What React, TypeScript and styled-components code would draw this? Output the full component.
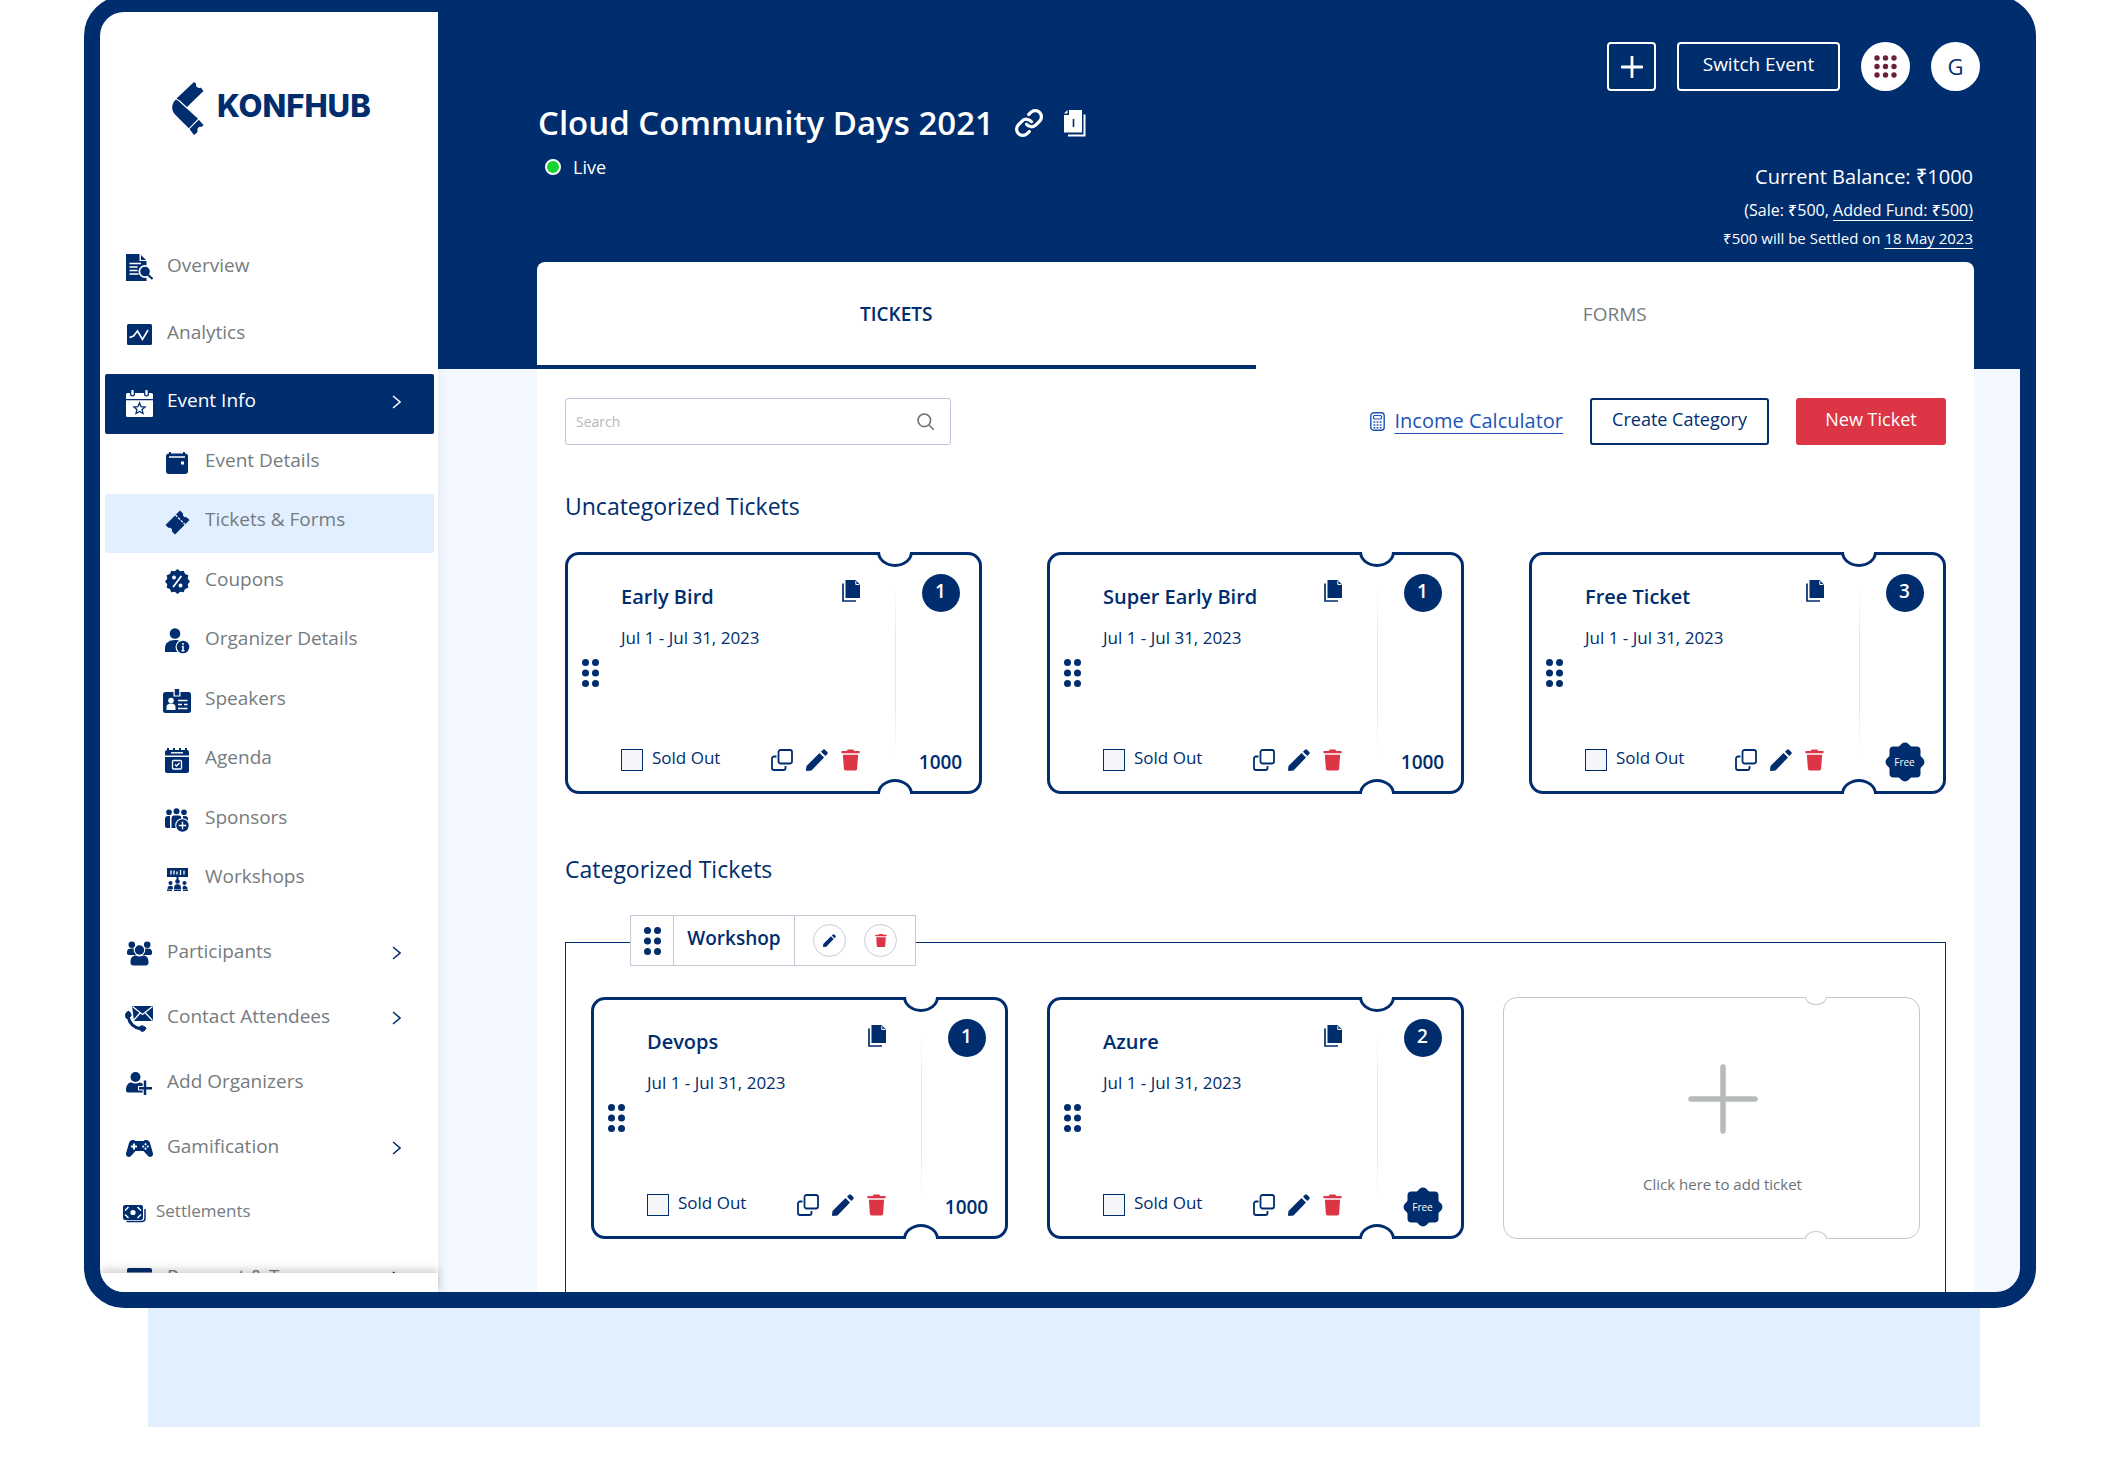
import React from 'react';
import styled, { createGlobalStyle, css } from 'styled-components';
import { Link as LinkIcon } from 'lucide-react';

const navy = '#002d6e';
const grey = '#757b80';
const red = '#dc3545';
const pale = '#f3f7fe';
const sky = '#e1efff';

const GlobalStyle = createGlobalStyle`
  *, *::before, *::after { box-sizing: border-box; }
  body {
    margin: 0;
    background: #fff;
    color: ${navy};
    font-family: "Open Sans", "Noto Sans", sans-serif;
  }
  h1, h2, h3, p, ul { margin: 0; padding: 0; }
  ul { list-style: none; }
  a { color: inherit; text-decoration: none; }
  svg { display: block; flex: none; }
  button, input { font: inherit; color: inherit; }
  button { padding: 0; border: 0; background: none; cursor: pointer; }
`;

/* ---------- page shell ---------- */

const Page = styled.div`
  display: flex;
  flex-direction: column;
  min-height: 100vh;
  overflow: hidden;
`;

const Device = styled.div`
  display: grid;
  grid-template-columns: 338px minmax(0, 1fr);
  margin: -4px 92px 0 84px;
  border: 16px solid ${navy};
  border-radius: 40px;
  background: ${navy};
  overflow: hidden;
`;

const Stand = styled.div`
  height: 119px;
  margin: 0 148px;
  background: ${sky};
`;

/* ---------- sidebar ---------- */

const Sidebar = styled.aside`
  contain: size;
  position: relative;
  z-index: 1;
  display: flex;
  flex-direction: column;
  background: #fff;
  box-shadow: 3px 360px 8px rgba(20, 50, 110, 0.05);
`;

const Brand = styled.a`
  display: flex;
  align-items: center;
  gap: 13px;
  height: 223px;
  padding: 0 0 30px 72px;
`;

const BrandName = styled.span`
  padding-bottom: 5px;
  font-family: Inter, "Open Sans", sans-serif;
  font-size: 31px;
  font-weight: 800;
  line-height: 36px;
`;

const Nav = styled.nav`
  flex: 1 1 0;
  min-height: 0;
  overflow: hidden;
  padding: 0 4px 0 5px;
`;

const SidebarFoot = styled.div`
  height: 19px;
  background: #fff;
  box-shadow: 0 -3px 10px rgba(0, 0, 0, 0.2);
`;

const NavGroup = styled.ul<{ $row: number; $top?: number; $bottom?: number }>`
  display: grid;
  grid-auto-rows: ${p => p.$row}px;
  padding: ${p => p.$top ?? 0}px 0 ${p => p.$bottom ?? 0}px;
`;

const SubNav = styled.ul`
  display: grid;
  grid-auto-rows: 1fr;
  height: 476px;
`;

const NavLink = styled.a<{ $tone?: 'plain' | 'open' | 'current'; $sub?: boolean; $small?: boolean }>`
  display: flex;
  align-items: center;
  gap: 14px;
  height: 100%;
  padding: 0 33px 0 ${p => (p.$sub ? 58 : 20)}px;
  border-radius: 2px;
  color: ${grey};
  font-size: 19px;
  line-height: 26px;
  ${p => p.$tone === 'open' && css`background: ${navy}; color: #fff;`}
  ${p => p.$tone === 'current' && css`background: ${sky};`}
  ${p => p.$small && css`gap: 8px; padding-left: 15px; font-size: 17px;`}
`;

const NavIcon = styled.span<{ $light?: boolean }>`
  display: flex;
  justify-content: center;
  width: 28px;
  padding-bottom: 2px;
  color: ${p => (p.$light ? '#fff' : navy)};
`;

const NavLabel = styled.span`
  flex: 1;
  padding-bottom: 8px;
  white-space: nowrap;
`;

const NavChevron = styled.span<{ $light?: boolean }>`
  padding-bottom: 4px;
  color: ${p => (p.$light ? '#fff' : navy)};
`;

/* ---------- main header ---------- */

const Main = styled.main`
  display: flex;
  flex-direction: column;
  background: linear-gradient(${navy} 357px, ${pale} 357px);
`;

const TopBar = styled.div`
  display: flex;
  justify-content: flex-end;
  gap: 21px;
  padding: 30px 40px 0;
`;

const OutlineButton = styled.button<{ $wide?: boolean }>`
  display: flex;
  align-items: center;
  justify-content: center;
  height: 49px;
  min-width: ${p => (p.$wide ? 163 : 49)}px;
  padding-bottom: ${p => (p.$wide ? 6 : 0)}px;
  border: 2px solid #fff;
  border-radius: 4px;
  color: #fff;
  font-size: 19px;
`;

const RoundButton = styled.button<{ $letter?: boolean }>`
  display: flex;
  align-items: center;
  justify-content: center;
  width: 49px;
  height: 49px;
  padding-bottom: ${p => (p.$letter ? 2 : 0)}px;
  border-radius: 50%;
  background: #fff;
  color: ${navy};
  font-size: 22px;
  font-weight: 500;
`;

const EventHeader = styled.header`
  display: flex;
  justify-content: space-between;
  height: 171px;
  padding: 10px 47px 10px 100px;
  color: #fff;
`;

const TitleRow = styled.div`
  display: flex;
  align-items: center;
  gap: 20px;
`;

const Title = styled.h1`
  font-size: 33px;
  font-weight: 600;
  line-height: 44px;
`;

const Status = styled.p`
  display: flex;
  align-items: center;
  gap: 12px;
  padding: 10px 0 0 7px;
  font-size: 18px;
  line-height: 24px;
`;

const StatusDot = styled.span`
  width: 16px;
  height: 16px;
  border: 2px solid #fff;
  border-radius: 50%;
  background: #12d62c;
`;

const Balance = styled.div`
  display: flex;
  flex-direction: column;
  align-self: flex-end;
  text-align: right;
  font-size: 15px;
  line-height: 28px;
`;

const BalanceTotal = styled.p`
  font-size: 20px;
  font-weight: 500;
  line-height: 38px;
`;

const BalanceSplit = styled.p`
  font-size: 16px;
  font-weight: 500;
`;

const Underlined = styled.a`
  text-decoration: underline;
  text-decoration-thickness: 1px;
  text-underline-offset: 4px;
`;

/* ---------- panel ---------- */

const Panel = styled.section`
  flex: 1;
  margin: 0 46px 0 99px;
  border-radius: 8px 8px 0 0;
  background: #fff;
`;

const Tabs = styled.div`
  display: grid;
  grid-template-columns: 1fr 1fr;
`;

const Tab = styled.button<{ $active?: boolean }>`
  height: 107px;
  border-bottom: 4px solid ${p => (p.$active ? navy : 'transparent')};
  color: ${p => (p.$active ? navy : grey)};
  font-size: 19px;
  font-weight: ${p => (p.$active ? 600 : 400)};
`;

const PanelBody = styled.div`
  padding: 29px 28px 0;
`;

const Toolbar = styled.div`
  display: flex;
  align-items: center;
  gap: 27px;
`;

const SearchBox = styled.label`
  display: flex;
  align-items: center;
  width: 386px;
  height: 47px;
  margin-right: auto;
  padding: 0 15px 0 8px;
  border: 1px solid #bfc3da;
  border-radius: 3px;
  color: #6d7276;
`;

const SearchInput = styled.input`
  flex: 1;
  min-width: 0;
  border: 0;
  outline: 0;
  background: none;
  font-size: 14px;
  &::placeholder { color: #b4b8bb; opacity: 1; }
`;

const CalculatorLink = styled.a`
  display: flex;
  align-items: center;
  gap: 9px;
  color: #1c54b8;
  font-size: 20px;
  font-weight: 500;
`;

const CalculatorText = styled.span`
  padding-bottom: 3px;
  text-decoration: underline;
  text-decoration-thickness: 1px;
  text-underline-offset: 5px;
`;

const ActionButton = styled.button<{ $solid?: boolean }>`
  height: 47px;
  padding: 0 20px 6px;
  min-width: ${p => (p.$solid ? 150 : 179)}px;
  border: 2px solid ${p => (p.$solid ? red : navy)};
  border-radius: 3px;
  background: ${p => (p.$solid ? red : '#fff')};
  color: ${p => (p.$solid ? '#fff' : navy)};
  font-size: 18px;
  font-weight: 500;
`;

const SectionTitle = styled.h2<{ $top: number }>`
  padding: ${p => p.$top}px 0 30px;
  font-size: 23px;
  font-weight: 500;
  line-height: 32px;
`;

const TicketGrid = styled.div<{ $gap: number }>`
  display: grid;
  grid-template-columns: repeat(3, minmax(0, 1fr));
  gap: ${p => p.$gap}px;
`;

/* ---------- ticket card ---------- */

type NotchProps = { $line: string; $w: number; $r: number; $x: number };

const notch = css<NotchProps>`
  position: relative;
  border: ${p => p.$w}px solid ${p => p.$line};
  background: #fff;
  &::before, &::after {
    content: "";
    position: absolute;
    right: ${p => p.$x}px;
    width: ${p => p.$r * 2}px;
    height: ${p => p.$r - 3}px;
    border: ${p => p.$w}px solid ${p => p.$line};
    background: #fff;
  }
  &::before {
    top: -${p => p.$w}px;
    border-top: 0;
    border-radius: 0 0 50% 50% / 0 0 100% 100%;
  }
  &::after {
    bottom: -${p => p.$w}px;
    border-bottom: 0;
    border-radius: 50% 50% 0 0 / 100% 100% 0 0;
  }
`;

const Card = styled.article<NotchProps>`
  ${notch}
  display: grid;
  grid-template-columns: 53px minmax(0, 1fr) 84px;
  min-height: 242px;
  border-radius: 14px;
`;

const Handle = styled.button`
  display: flex;
  align-items: center;
  padding-left: 14px;
  cursor: grab;
`;

const CardMain = styled.div`
  display: flex;
  flex-direction: column;
  padding: 25px 35px 20px 0;
`;

const CardTop = styled.div`
  display: flex;
  justify-content: space-between;
  align-items: flex-start;
`;

const CardTitle = styled.h3`
  font-size: 20px;
  font-weight: 600;
  line-height: 34px;
`;

const CardDates = styled.p`
  padding-top: 12px;
  font-size: 17px;
  font-weight: 500;
  line-height: 24px;
`;

const CardFoot = styled.div`
  display: flex;
  align-items: center;
  gap: 13px;
  margin-top: auto;
`;

const SoldOut = styled.label`
  display: flex;
  align-items: center;
  gap: 9px;
  height: 22px;
  margin-right: auto;
  font-size: 17px;
  line-height: 22px;
`;

const SoldOutBox = styled.input`
  appearance: none;
  width: 22px;
  height: 22px;
  margin: 0;
  border: 1px solid ${navy};
  background: #f4f6f9;
  &:checked { background: ${navy}; }
`;

const SoldOutText = styled.span`
  padding-bottom: 4px;
`;

const IconButton = styled.button<{ $danger?: boolean; $ring?: boolean }>`
  display: flex;
  align-items: center;
  justify-content: center;
  color: ${p => (p.$danger ? red : navy)};
  ${p => p.$ring && css`
    width: 33px;
    height: 33px;
    border: 1px solid #c8ccda;
    border-radius: 50%;
  `}
`;

const Stub = styled.div`
  display: flex;
  flex-direction: column;
  align-items: center;
  justify-content: space-between;
  padding: 19px 0 9px 7px;
  background: linear-gradient(transparent, #e6e7ee 30%, #e6e7ee 70%, transparent) 0 31px / 1px 170px no-repeat;
`;

const Count = styled.span`
  display: flex;
  align-items: center;
  justify-content: center;
  width: 38px;
  height: 38px;
  padding-bottom: 4px;
  border-radius: 50%;
  background: ${navy};
  color: #fff;
  font-size: 19px;
  font-weight: 600;
`;

const PriceSlot = styled.span`
  display: grid;
  place-items: center;
  height: 40px;
  font-size: 19px;
  font-weight: 600;
  & > * { grid-area: 1 / 1; }
`;

const FreeText = styled.span`
  color: #fff;
  font-size: 10px;
  font-weight: 500;
`;

const AddCard = styled.button<NotchProps>`
  ${notch}
  display: flex;
  flex-direction: column;
  align-items: center;
  gap: 38px;
  padding: 66px 0 0 22px;
  min-height: 242px;
  border-radius: 14px;
  color: #6b7176;
  font-size: 15px;
  line-height: 24px;
`;

/* ---------- category ---------- */

const Category = styled.section`
  margin-top: 27px;
  padding: 0 25px 53px;
  border: 1px solid ${navy};
  border-bottom: 0;
`;

const CategoryTag = styled.div`
  position: relative;
  display: grid;
  grid-template-columns: 42px 121px 121px;
  width: max-content;
  height: 51px;
  margin: -28px 0 31px 39px;
  border: 1px solid #c3c7d6;
  background: #fff;
`;

const TagCell = styled.div<{ $pad?: number }>`
  display: flex;
  align-items: center;
  justify-content: center;
  gap: 18px;
  padding-bottom: ${p => p.$pad ?? 0}px;
  font-size: 19px;
  font-weight: 600;
  & + & { border-left: 1px solid #c3c7d6; }
`;

/* ---------- drawings ---------- */

const Svg = ({ w, h, box, children }: { w: number; h: number; box?: string; children: React.ReactNode }) => (
  <svg width={w} height={h} viewBox={box ?? `0 0 ${w} ${h}`} fill="currentColor" aria-hidden="true">{children}</svg>
);

const LogoMark = () => (
  <Svg w={32} h={53}>
    <path d="M22 0l2 1.500c-.6 3 1.600 5 4.300 4.200 1-.2 1.500.5 1.500 1.300L31.500 9 15 25 7.800 18.600 4.500 16.500z" />
    <path d="M4 17.500L7 19.200 26 36.800 16.800 46.200 3.500 33C-1 28.500-1 22 4 17.500z" />
    <path d="M26.800 37.800L31.500 43l-1.500 1.800c-3-.8-5.200 1.400-4.500 4.200.2 1-.3 1.500-1 2L22 53l-4.500-6z" />
    <path d="M7 19L16 27" stroke="#fff" strokeWidth=".8" />
  </Svg>
);

const OverviewIcon = () => (
  <Svg w={27} h={27}>
    <path d="M0 0h13.500v7H20.500v20H0z" />
    <path d="M15 1l5 5h-5z" />
    <path d="M3.500 9.500H15M3.500 13h8M3.500 16.500h8M3.500 20h9" stroke="#fff" strokeWidth="1.500" />
    <circle cx="19" cy="17.500" r="6.500" fill="#fff" />
    <circle cx="19" cy="17.500" r="4.800" />
    <path d="M21 20l5.500 5" stroke="currentColor" strokeWidth="2" />
  </Svg>
);

const AnalyticsIcon = () => (
  <Svg w={25} h={21}>
    <rect width="25" height="21" rx="1.500" />
    <path d="M2.500 13.500l4-1.500 4-5 5 8.500L21 6" fill="none" stroke="#fff" strokeWidth="1.600" />
  </Svg>
);

const EventInfoIcon = () => (
  <Svg w={27} h={27}>
    <path d="M0 4.500A1.500 1.500 0 011.500 3H25.500A1.500 1.500 0 0127 4.500V9H0z" />
    <path d="M0 10.200h27v15.300a1.500 1.500 0 01-1.500 1.500h-24A1.500 1.500 0 010 25.500z" />
    <path d="M6.500 0v4M20.500 0v4" stroke={navy} strokeWidth="5" strokeLinecap="round" />
    <path d="M6.500 1v3M20.500 1v3" stroke="currentColor" strokeWidth="2.400" strokeLinecap="round" />
    <path d="M13.500 13l1.600 3.700 4 .3-3 2.600.9 3.900-3.500-2.100-3.500 2.100.9-3.900-3-2.600 4-.3z" fill="none" stroke={navy} strokeWidth="1.300" />
  </Svg>
);

const EventDetailsIcon = () => (
  <Svg w={22} h={22}>
    <path d="M3 1.500V0h2v1.500h12V0h2v1.500a3 3 0 013 3V19a3 3 0 01-3 3H3a3 3 0 01-3-3V4.500a3 3 0 013-3z" />
    <path d="M3 5h16" stroke="#fff" strokeWidth="1.500" />
    <rect x="15" y="9.500" width="3" height="3" fill="#fff" />
  </Svg>
);

const TicketIcon = () => (
  <Svg w={25} h={25}>
    <path d="M15 .5l3 3c-.5 2.500 1.200 4.300 3.700 3.700L24.500 10 10 24.500l-3-3c.5-2.500-1.200-4.300-3.700-3.700L.5 15z" />
    <path d="M10.500 5l9.500 9.500" stroke={sky} strokeWidth="1.400" strokeDasharray="2.500 1.300" />
  </Svg>
);

const scallops = Array.from({ length: 24 }, (_, i) => {
  const r = i % 2 ? 10.6 : 12.5;
  const a = (i * Math.PI) / 12;
  return `${12.5 + r * Math.cos(a)},${12.5 + r * Math.sin(a)}`;
}).join(' ');

const CouponIcon = () => (
  <Svg w={25} h={25}>
    <polygon points={scallops} strokeLinejoin="round" />
    <path d="M16 7.500L8.500 17.500" stroke="#fff" strokeWidth="1.800" strokeLinecap="round" />
    <circle cx="9" cy="8.500" r="1.900" fill="#fff" />
    <circle cx="15.500" cy="16.500" r="1.900" fill="#fff" />
  </Svg>
);

const OrganizerIcon = () => (
  <Svg w={25} h={27}>
    <circle cx="10" cy="5.500" r="5.300" />
    <path d="M0 24v-4c0-5 4-8 10-8 5.500 0 9 2.500 9.500 7L13 24z" />
    <circle cx="18" cy="19" r="7.500" fill="#fff" />
    <circle cx="18" cy="19" r="6.300" />
    <path d="M18 15v1.800M16.800 18.500H18v4.200M16.500 22.800h3" stroke="#fff" strokeWidth="1.500" fill="none" />
  </Svg>
);

const SpeakerIcon = () => (
  <Svg w={28} h={24}>
    <rect y="3" width="28" height="21" rx="2.500" />
    <path d="M10.500 0h7v7.500h-7z" fill="#fff" />
    <path d="M11.800 0h4.400v6.500h-4.400z" />
    <circle cx="8" cy="11.500" r="2.800" fill="#fff" />
    <path d="M3.500 21v-3c0-2 1.500-3.500 4.500-3.500s4.500 1.500 4.500 3.500v3z" fill="#fff" />
    <path d="M15 11.500h9.500M15 15.500h4M21 15.500h3.500M15 19.500h9.500" stroke="#fff" strokeWidth="1.500" />
  </Svg>
);

const AgendaIcon = () => (
  <Svg w={24} h={25}>
    <path d="M0 7.500V4a2 2 0 012-2V0h2v2h4V0h2v2h4V0h2v2h4V0h2v2a2 2 0 012 2v3.500z" />
    <path d="M0 9h24v14a2 2 0 01-2 2H2a2 2 0 01-2-2z" />
    <path d="M6 4.800h12" stroke="#fff" strokeWidth="1.400" />
    <rect x="7.500" y="12.500" width="9" height="8.500" rx="1" fill="none" stroke="#fff" strokeWidth="1.300" />
    <path d="M10 16.500l1.500 1.500 3-3" fill="none" stroke="#fff" strokeWidth="1.300" />
  </Svg>
);

const SponsorIcon = () => (
  <Svg w={24} h={24}>
    <circle cx="4" cy="4.200" r="2.800" />
    <circle cx="11.500" cy="3.200" r="3" />
    <circle cx="19" cy="4.200" r="2.800" />
    <path d="M0 11a3 3 0 013-3h2v12H2a2 2 0 01-2-2z" />
    <path d="M6.500 10.500a3 3 0 013-3h4a3 3 0 013 3V20h-10z" />
    <path d="M18 8h2a3 3 0 013 3v5h-5z" />
    <circle cx="17.500" cy="17.500" r="7.300" fill="#fff" />
    <circle cx="17.500" cy="17.500" r="6.200" />
    <path d="M17.500 13.800v7.400M13.800 17.500h7.400" stroke="#fff" strokeWidth="1.400" />
  </Svg>
);

const WorkshopIcon = () => (
  <Svg w={21} h={24}>
    <path d="M0 1h21v9H0zM9.500 10h2v3h-2z" />
    <path d="M4 3.500v4M7 3.500v4M10 4.500v3M13.500 3v5M17 3.500v4" stroke="#fff" strokeWidth="1.300" />
    <circle cx="3.500" cy="16" r="2" />
    <circle cx="10.500" cy="14.500" r="2.300" />
    <circle cx="17.500" cy="16" r="2" />
    <path d="M.5 22c0-2.500 1-3.300 3-3.300s2.500.8 2.500 3.300zM15.500 22c0-2.500.5-3.300 2-3.300s3 .8 3 3.300z" />
    <path d="M7 22c0-3.500 1-4.800 3.500-4.800S14 18.500 14 22z" />
    <path d="M0 23.200h5M7 23.200h7M16 23.200h5" stroke="currentColor" strokeWidth="1.600" />
  </Svg>
);

const ParticipantsIcon = () => (
  <Svg w={25} h={25}>
    <circle cx="4.800" cy="3.700" r="3.300" />
    <circle cx="20.200" cy="3.700" r="3.300" />
    <path d="M0 13v-2c0-2.500 1.500-3.500 4.500-3.500h2.500L9 14H1.500z" />
    <path d="M25 13v-2c0-2.500-1.500-3.500-4.500-3.500H18L16 14h7.500z" />
    <circle cx="12.500" cy="9" r="5.800" fill="#fff" />
    <circle cx="12.500" cy="9" r="4.700" />
    <path d="M3.500 21.500c0-5 2-7 5.500-7 2 1.200 5 1.200 7 0 3.500 0 5.500 2 5.500 7 0 2-1 3-3 3h-12c-2 0-3-1-3-3z" />
  </Svg>
);

const ContactIcon = () => (
  <Svg w={28} h={27}>
    <path d="M7 1h21v15H9z" />
    <path d="M7.500 1.500L17.500 9.500 27.500 1.500M8.500 15.500l6.500-7.500M27.500 15.500l-7-7.500" fill="none" stroke="#fff" strokeWidth="1.300" />
    <path d="M3 11c1 6.500 5.500 11.500 13 13" fill="none" stroke="currentColor" strokeWidth="3" />
    <path d="M.5 9.500c.5-2 2-3 3.500-3.200 1 1 2 2.500 2.200 4L3.800 13.500 1 13zM13 23l3.500-2.300c1.800 0 3.200 1 4.500 2.300-.5 1.800-1.500 3.200-4 3.500z" stroke="currentColor" strokeLinejoin="round" />
  </Svg>
);

const AddUserIcon = () => (
  <Svg w={26} h={23}>
    <circle cx="9.500" cy="5" r="5" />
    <path d="M0 18c0-5 2.500-7.500 5.500-7.500 2.500 1.200 5.500 1.200 8 0 2 0 3.500 1 4.500 3v7H2c-1.200 0-2-.8-2-2.500z" />
    <path d="M19 9v14M12 16.200h14" stroke="#fff" strokeWidth="4.600" />
    <path d="M19 8.500V23M13 16.200h13" stroke="currentColor" strokeWidth="2.500" />
  </Svg>
);

const GamepadIcon = () => (
  <Svg w={27} h={17}>
    <path d="M3 3C3.500 1 5 0 7 0c1.200 0 2 .5 2.500 1h8c.5-.5 1.300-1 2.500-1 2 0 3.500 1 4 3l3 10.500c.5 3-3 4.500-5 2.500l-4.500-5h-8L5 16c-2 2-5.500.5-5-2.500z" />
    <path d="M8 3.500v6M5 6.500h6" stroke="#fff" strokeWidth="2" />
    <circle cx="19.500" cy="4.300" r="1.100" fill="#fff" />
    <circle cx="19.500" cy="8.700" r="1.100" fill="#fff" />
    <circle cx="17.200" cy="6.500" r="1.100" fill="#fff" />
    <circle cx="21.800" cy="6.500" r="1.100" fill="#fff" />
  </Svg>
);

const MoneyIcon = () => (
  <Svg w={23} h={18}>
    <path d="M22 4v9.500a3 3 0 01-3 3H3.500" fill="none" stroke="currentColor" strokeWidth="1.500" />
    <rect width="20" height="15" rx="2" />
    <circle cx="10" cy="7.500" r="2.600" fill="#fff" />
    <path d="M2 5.500L5.500 2M14.500 2L18 5.500M2 9.500L5.500 13M14.500 13L18 9.500" fill="none" stroke="#fff" strokeWidth="1.500" />
  </Svg>
);

const PaymentIcon = () => (
  <Svg w={25} h={21}>
    <rect width="25" height="21" rx="2" />
    <path d="M0 6h25" stroke="#fff" strokeWidth="3" />
  </Svg>
);

const Chevron = () => (
  <Svg w={9} h={14}>
    <path d="M1 1l7 6-7 6" fill="none" stroke="currentColor" strokeWidth="1.500" />
  </Svg>
);

const PlusIcon = () => (
  <Svg w={22} h={22}>
    <path d="M11 1v20M1 11h20" stroke="currentColor" strokeWidth="2.800" strokeLinecap="round" />
  </Svg>
);

const BigPlusIcon = () => (
  <Svg w={70} h={70}>
    <path d="M35 3v64M3 35h64" stroke="#b6babb" strokeWidth="5.500" strokeLinecap="round" />
  </Svg>
);

const AppsIcon = () => (
  <Svg w={23} h={23}>
    {[3, 11.500, 20].map(y => [3, 11.500, 20].map(x => (
      <circle key={`${x}-${y}`} cx={x} cy={y} r="2.700" fill="#6b1f3b" />
    )))}
  </Svg>
);

const HeaderCopyIcon = () => (
  <Svg w={22} h={27}>
    <path d="M5 0h13v22.500H0V5h5z" />
    <path d="M0 3.500L3.500 0v3.500z" />
    <path d="M20.500 4.500v21H4" fill="none" stroke="currentColor" strokeWidth="2" />
    <path d="M9.500 9v8" stroke={navy} strokeWidth="1.600" />
  </Svg>
);

const CopyIcon = () => (
  <Svg w={18} h={22}>
    <path d="M3.500 0h10L18 4.500V18H3.500z" />
    <path d="M13.800 1v3.500h3.500" fill="none" stroke="#fff" strokeWidth="1" />
    <path d="M1 3.500v17.500h13" fill="none" stroke="currentColor" strokeWidth="1.700" />
  </Svg>
);

const GripIcon = () => (
  <Svg w={17} h={28}>
    {[3.500, 14, 24.500].map(y => [3.500, 13.500].map(x => (
      <circle key={`${x}-${y}`} cx={x} cy={y} r="3.500" />
    )))}
  </Svg>
);

const LayersIcon = () => (
  <Svg w={22} h={22}>
    <rect x="7.500" y="1" width="13.500" height="13.500" rx="2" fill="none" stroke="currentColor" strokeWidth="1.800" />
    <path d="M5.500 7.500H3a2 2 0 00-2 2V19a2 2 0 002 2h9.500a2 2 0 002-2v-2" fill="none" stroke="currentColor" strokeWidth="1.800" />
  </Svg>
);

const PencilIcon = ({ size = 22 }: { size?: number }) => (
  <Svg w={size} h={size} box="0 0 22 22">
    <path d="M13.500 4l4.500 4.500L5.500 21.500l-4.500.5a1 1 0 01-1-1L.5 17z" />
    <path d="M15 2.700l2-2a1.500 1.500 0 012 0l2.300 2.300a1.500 1.500 0 010 2l-2 2z" />
  </Svg>
);

const TrashIcon = ({ w = 19, h = 22 }: { w?: number; h?: number }) => (
  <Svg w={w} h={h} box="0 0 20 22">
    <path d="M.5 1.500H6L7 0h6l1 1.500h5.500V4H.5z" />
    <path d="M2 5.500h16l-1 14.500a2 2 0 01-2 2H5a2 2 0 01-2-2z" />
  </Svg>
);

const FreeBadge = () => (
  <Svg w={40} h={40}>
    <rect x="4.500" y="4.500" width="31" height="31" rx="4" />
    <rect x="4.800" y="4.800" width="30.400" height="30.400" rx="5" transform="rotate(45 20 20)" />
  </Svg>
);

const SearchIcon = () => (
  <Svg w={18} h={18}>
    <circle cx="7.300" cy="7.300" r="6.300" fill="none" stroke="currentColor" strokeWidth="1.600" />
    <path d="M11.800 11.800l5 5" stroke="currentColor" strokeWidth="1.600" />
  </Svg>
);

const CalculatorIcon = () => (
  <Svg w={15} h={19}>
    <rect x=".8" y=".8" width="13.400" height="17.400" rx="3" fill="none" stroke="currentColor" strokeWidth="1.400" />
    <rect x="3.500" y="3.500" width="8" height="3.500" rx="1" fill="none" stroke="currentColor" strokeWidth="1.200" />
    <path d="M3.500 10h8M3.500 13h8M3.500 15.800h8" stroke="currentColor" strokeWidth="1.600" strokeDasharray="1.800 1.300" />
  </Svg>
);

/* ---------- content ---------- */

type Item = { label: string; icon: React.ReactNode; more?: boolean; small?: boolean };

const topItems: Item[] = [
  { label: 'Overview', icon: <OverviewIcon /> },
  { label: 'Analytics', icon: <AnalyticsIcon /> },
];

const subItems: Item[] = [
  { label: 'Event Details', icon: <EventDetailsIcon /> },
  { label: 'Tickets & Forms', icon: <TicketIcon /> },
  { label: 'Coupons', icon: <CouponIcon /> },
  { label: 'Organizer Details', icon: <OrganizerIcon /> },
  { label: 'Speakers', icon: <SpeakerIcon /> },
  { label: 'Agenda', icon: <AgendaIcon /> },
  { label: 'Sponsors', icon: <SponsorIcon /> },
  { label: 'Workshops', icon: <WorkshopIcon /> },
];

const bottomItems: Item[] = [
  { label: 'Participants', icon: <ParticipantsIcon />, more: true },
  { label: 'Contact Attendees', icon: <ContactIcon />, more: true },
  { label: 'Add Organizers', icon: <AddUserIcon /> },
  { label: 'Gamification', icon: <GamepadIcon />, more: true },
  { label: 'Settlements', icon: <MoneyIcon />, small: true },
  { label: 'Payment & Taxes', icon: <PaymentIcon />, more: true },
];

type TicketData = { name: string; count: number; price: string };

const uncategorized: TicketData[] = [
  { name: 'Early Bird', count: 1, price: '1000' },
  { name: 'Super Early Bird', count: 1, price: '1000' },
  { name: 'Free Ticket', count: 3, price: 'Free' },
];

const workshop: TicketData[] = [
  { name: 'Devops', count: 1, price: '1000' },
  { name: 'Azure', count: 2, price: 'Free' },
];

const NavItem = ({ item, sub, tone }: { item: Item; sub?: boolean; tone?: 'open' | 'current' }) => (
  <li>
    <NavLink href="#" $sub={sub} $tone={tone} $small={item.small}>
      <NavIcon $light={tone === 'open'}>{item.icon}</NavIcon>
      <NavLabel>{item.label}</NavLabel>
      {item.more && <NavChevron $light={tone === 'open'}><Chevron /></NavChevron>}
    </NavLink>
  </li>
);

const Ticket = ({ name, count, price }: TicketData) => (
  <Card $line={navy} $w={3} $r={18} $x={66}>
    <Handle aria-label={`Move ${name}`}><GripIcon /></Handle>
    <CardMain>
      <CardTop>
        <CardTitle>{name}</CardTitle>
        <IconButton aria-label={`Copy ${name}`}><CopyIcon /></IconButton>
      </CardTop>
      <CardDates>Jul 1 - Jul 31, 2023</CardDates>
      <CardFoot>
        <SoldOut>
          <SoldOutBox type="checkbox" />
          <SoldOutText>Sold Out</SoldOutText>
        </SoldOut>
        <IconButton aria-label={`Duplicate ${name}`}><LayersIcon /></IconButton>
        <IconButton aria-label={`Edit ${name}`}><PencilIcon /></IconButton>
        <IconButton $danger aria-label={`Delete ${name}`}><TrashIcon /></IconButton>
      </CardFoot>
    </CardMain>
    <Stub>
      <Count>{count}</Count>
      <PriceSlot>
        {price === 'Free' ? <><FreeBadge /><FreeText>Free</FreeText></> : <span>{price}</span>}
      </PriceSlot>
    </Stub>
  </Card>
);

export default function App() {
  return (
    <Page>
      <GlobalStyle />
      <Device>
        <Sidebar>
          <Brand href="#"><LogoMark /><BrandName>KONFHUB</BrandName></Brand>
          <Nav>
            <NavGroup $row={67} $bottom={5}>
              {topItems.map(i => <NavItem key={i.label} item={i} />)}
            </NavGroup>
            <NavGroup $row={60}>
              <NavItem item={{ label: 'Event Info', icon: <EventInfoIcon />, more: true }} tone="open" />
            </NavGroup>
            <SubNav>
              {subItems.map(i => (
                <NavItem key={i.label} item={i} sub tone={i.label === 'Tickets & Forms' ? 'current' : undefined} />
              ))}
            </SubNav>
            <NavGroup $row={65} $top={12}>
              {bottomItems.map(i => <NavItem key={i.label} item={i} />)}
            </NavGroup>
          </Nav>
          <SidebarFoot />
        </Sidebar>

        <Main>
          <TopBar>
            <OutlineButton aria-label="Add"><PlusIcon /></OutlineButton>
            <OutlineButton $wide>Switch Event</OutlineButton>
            <RoundButton aria-label="Apps"><AppsIcon /></RoundButton>
            <RoundButton $letter>G</RoundButton>
          </TopBar>
          <EventHeader>
            <div>
              <TitleRow>
                <Title>Cloud Community Days 2021</Title>
                <LinkIcon size={30} strokeWidth={2.6} aria-hidden="true" />
                <HeaderCopyIcon />
              </TitleRow>
              <Status><StatusDot />Live</Status>
            </div>
            <Balance>
              <BalanceTotal>Current Balance: ₹1000</BalanceTotal>
              <BalanceSplit>(Sale: ₹500, <Underlined href="#">Added Fund: ₹500)</Underlined></BalanceSplit>
              <p>₹500 will be Settled on <Underlined href="#">18 May 2023</Underlined></p>
            </Balance>
          </EventHeader>

          <Panel>
            <Tabs role="tablist">
              <Tab role="tab" aria-selected="true" $active>TICKETS</Tab>
              <Tab role="tab" aria-selected="false">FORMS</Tab>
            </Tabs>
            <PanelBody>
              <Toolbar>
                <SearchBox>
                  <SearchInput type="text" placeholder="Search" aria-label="Search" />
                  <SearchIcon />
                </SearchBox>
                <CalculatorLink href="#">
                  <CalculatorIcon />
                  <CalculatorText>Income Calculator</CalculatorText>
                </CalculatorLink>
                <ActionButton>Create Category</ActionButton>
                <ActionButton $solid>New Ticket</ActionButton>
              </Toolbar>

              <SectionTitle $top={45}>Uncategorized Tickets</SectionTitle>
              <TicketGrid $gap={65}>
                {uncategorized.map(t => <Ticket key={t.name} {...t} />)}
              </TicketGrid>

              <SectionTitle $top={59}>Categorized Tickets</SectionTitle>
              <Category>
                <CategoryTag>
                  <TagCell><IconButton aria-label="Move Workshop"><GripIcon /></IconButton></TagCell>
                  <TagCell $pad={5}>Workshop</TagCell>
                  <TagCell>
                    <IconButton $ring aria-label="Edit Workshop"><PencilIcon size={13} /></IconButton>
                    <IconButton $ring $danger aria-label="Delete Workshop"><TrashIcon w={12} h={15} /></IconButton>
                  </TagCell>
                </CategoryTag>
                <TicketGrid $gap={39}>
                  {workshop.map(t => <Ticket key={t.name} {...t} />)}
                  <AddCard $line="#c2c6d0" $w={1} $r={11} $x={92}>
                    <BigPlusIcon />
                    Click here to add ticket
                  </AddCard>
                </TicketGrid>
              </Category>
            </PanelBody>
          </Panel>
        </Main>
      </Device>
      <Stand />
    </Page>
  );
}
